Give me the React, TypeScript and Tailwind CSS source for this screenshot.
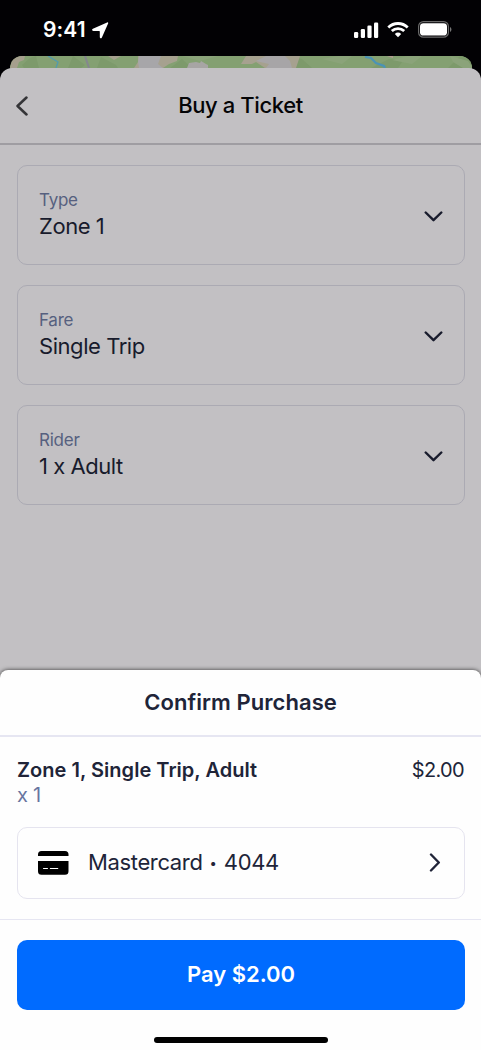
import React from "react";

type Field = { label: string; value: string };

const fields: Field[] = [
  { label: "Type", value: "Zone 1" },
  { label: "Fare", value: "Single Trip" },
  { label: "Rider", value: "1 x Adult" },
];

function LocationArrow() {
  return (
    <svg width="17" height="17" viewBox="0 0 17 17" fill="#fff" className="ml-[8px]">
      <path d="M15.1.4.9 6.7c-1.300.6-1 2.200.5 2.200H7.200c.4 0 .6.200.6.600v5.400c0 1.600 1.500 1.800 2.100.5L16.100 1.500c.4-.8-.2-1.400-1-1.100Z" />
    </svg>
  );
}

function StatusBar() {
  return (
    <div className="flex h-[56px] items-start justify-between pl-[43px] pr-[29px] pt-[18px] text-white">
      <div className="flex h-6 items-center">
        <span className="w-[41px] whitespace-nowrap text-[21px] font-semibold leading-6 tracking-[0.1px]">9:41</span>
        <LocationArrow />
      </div>
      <div className="flex h-6 items-center">
        <svg width="25" height="16" viewBox="0 0 25 16" fill="#fff" className="-mt-px">
          <rect x="0" y="10" width="4.200" height="6" rx="1.200" />
          <rect x="6.800" y="7" width="4.200" height="9" rx="1.200" />
          <rect x="13.400" y="3.500" width="4.200" height="12.500" rx="1.200" />
          <rect x="20" y="0.500" width="4.200" height="15.500" rx="1.200" />
        </svg>
        <svg width="22" height="16" viewBox="0 0 22 16" className="-mt-px ml-[8px]" fill="none" stroke="#fff" strokeWidth="2.800">
          <path d="M1.300 5.400a14 14 0 0 1 19.400 0" />
          <path d="M4.800 9.100a9 9 0 0 1 12.400 0" />
          <path d="M11 15.200 7.800 12.100a4.700 4.700 0 0 1 6.400 0Z" fill="#fff" stroke="none" />
        </svg>
        <svg width="34" height="17" viewBox="0 0 34 17" className="-mt-px ml-[9px]">
          <rect x="0.600" y="0.600" width="29.800" height="15.600" rx="4.800" fill="none" stroke="#6b6b6b" strokeWidth="1.200" />
          <rect x="2" y="2.200" width="27" height="12.400" rx="3.400" fill="#fff" />
          <path d="M32 6v5c1.900-.8 1.900-4.200 0-5Z" fill="#777" />
        </svg>
      </div>
    </div>
  );
}

function MapStrip() {
  return (
    <div className="ml-[10px] mr-[9px] h-[18px] overflow-hidden rounded-t-[12px] bg-[#84a072]">
      <svg width="462" height="18" viewBox="0 0 462 18">
        <path d="M0 12 2 4 7 0h8l-1 4-5 2-2 6Z" fill="#a59f8d" />
        <path d="m20 2 6-2 3 12H14l-2-3Zm38 10L63 0l12 9-4 3Zm29 0L91 1l15 8 2 3Zm73 0 12-9 10 9Zm112 0 8-12 12 3 10 9Zm89 0 18-9h15l-6 9Zm77 0 12-12h25l-6 6 10 6Z" fill="#7d9a6b" />
        <path d="m172 0 18 5 18-5Zm140 3 16-3h14l-10 8Zm70 1 15-4h15l-10 8Zm58-4 18 5 5 7h-10l-10-6Z" fill="#8ba37a" />
        <path d="m98 0 6 4 7-4Zm26 12 4-6 0-6h40l-1 5-8 3-6 4Z" fill="#a6a18f" />
        <path d="M129 0h22l-3 8 5 4h-24l-1-6Z" fill="#a7a6a9" />
        <path d="m177 12 2-5 7-1 4 1 1-2 5 3 2 1v3Z" fill="#a7a5a4" />
        <path d="m231 8 5-8h54l-4 12h-31l-9-6-4 2Z" fill="#a6a18f" />
        <path d="m246 5 10-5h19l5 5 2 7h-26l3-4Z" fill="#a7a5a7" />
        <path d="m75 0 4 12" stroke="#85868f" strokeWidth="2" />
        <path d="m38 0 10 6-2 6" fill="none" stroke="#529bad" strokeWidth="1.300" />
        <path d="m355 1 6 1 5 5 8 3 1 2" fill="none" stroke="#4b93b6" strokeWidth="2.200" />
        <path d="M377 0h6v2l-3-1Z" fill="#b39c91" />
      </svg>
    </div>
  );
}

function FieldCard({ label, value }: Field) {
  return (
    <div className="flex h-[100px] items-center justify-between rounded-[10px] border border-[#abaab3] px-[21px]">
      <div className="flex flex-col pb-[2px]">
        <span className="text-[17px] leading-[24px] tracking-[-0.25px] text-[#56607f]">{label}</span>
        <span className="-mt-px text-[22px] leading-[30px] tracking-[-0.45px] text-[#181b2c]">{value}</span>
      </div>
      <svg width="19" height="11" viewBox="0 0 19 11" fill="none" stroke="#181b2c" strokeWidth="2.400" strokeLinecap="round" strokeLinejoin="round" className="mt-[2px]">
        <path d="m1.700 1.500 7.800 7.700 7.800-7.700" />
      </svg>
    </div>
  );
}

function CardIcon() {
  return (
    <svg width="31" height="24" viewBox="0 0 31 24">
      <path d="M3.500 0h23.500a3.500 3.500 0 0 1 3.500 3.500V5H0V3.500A3.500 3.500 0 0 1 3.500 0ZM0 10h30.500v10.300a3.500 3.500 0 0 1-3.500 3.500H3.500A3.500 3.500 0 0 1 0 20.300Z" fill="#000" />
      <path d="M5.500 17.500h4M12.300 17.500h7.500" stroke="#fff" strokeWidth="1" strokeLinecap="round" />
    </svg>
  );
}

function ConfirmSheet() {
  return (
    <section className="relative flex h-[380px] flex-col rounded-t-[8px] bg-[#fefefe] text-[#202438] shadow-[0_0_4px_rgba(0,0,0,0.75)]">
      <h2 className="flex h-[67px] items-center justify-center border-b-2 border-[#e6e6f2] text-[22px] font-semibold tracking-[0.06px]">
        Confirm Purchase
      </h2>
      <div className="flex h-[90px] justify-between px-[17px] pt-[20px]">
        <div className="flex flex-col">
          <span className="text-[20px] font-semibold leading-[26px] tracking-[0.03px]">Zone 1, Single Trip, Adult</span>
          <span className="text-[20px] leading-[25px] tracking-[-0.3px] text-[#6875a0]">x 1</span>
        </div>
        <span className="text-[20px] leading-[26px] tracking-[-0.65px]">$2.00</span>
      </div>
      <div className="ml-[17px] mr-[16px] flex h-[72px] items-center rounded-[10px] border border-[#e5e4ef] pl-[20px] pr-[23px]">
        <CardIcon />
        <span className="-mt-[2px] ml-[19px] flex grow items-center text-[22px] leading-[30px] tracking-[-0.36px]">
          Mastercard
          <span className="mx-[7px] mt-px text-[13px] tracking-normal">•</span>
          4044
        </span>
        <svg width="12" height="19" viewBox="0 0 12 19" fill="none" stroke="#202438" strokeWidth="2.400" strokeLinecap="round" strokeLinejoin="round" className="-mt-px">
          <path d="m2 1.500 7.800 8L2 17.500" />
        </svg>
      </div>
      <div className="mt-[20px] border-t border-[#e6e6f2] pl-[17px] pr-[16px] pt-[20px]">
        <button className="flex h-[70px] w-full items-center justify-center rounded-[10px] bg-[#006bff] pb-[2px] text-[22px] font-semibold text-white">
          Pay $2.00
        </button>
      </div>
      <div className="ml-[154px] mt-[27px] h-[6px] w-[174px] rounded-full bg-black" />
    </section>
  );
}

export default function App() {
  return (
    <main className="flex h-[1050px] w-[481px] flex-col overflow-hidden bg-[#020104] font-['Inter',sans-serif]">
      <StatusBar />
      <MapStrip />
      <section className="-mt-[6px] flex h-[602px] shrink-0 flex-col rounded-t-[12px] bg-[#c2c0c3]">
        <header className="flex h-[77px] shrink-0 items-center border-b-2 border-[#9f9da2] pl-[16px] pr-[28px]">
          <svg width="12" height="20" viewBox="0 0 12 20" fill="none" stroke="#343437" strokeWidth="2.500" strokeLinecap="round" strokeLinejoin="round" className="mt-px">
            <path d="m10.500 1.500-9 8.500 9 8.500" />
          </svg>
          <h1 className="grow text-center text-[22px] font-medium tracking-[-0.4px] text-[#050507]">Buy a Ticket</h1>
        </header>
        <div className="ml-[17px] mr-[16px] mt-[20px] flex flex-col gap-[20px]">
          {fields.map((field) => (
            <FieldCard key={field.label} {...field} />
          ))}
        </div>
      </section>
      <div className="shrink-0 bg-[#c2c0c3]">
        <ConfirmSheet />
      </div>
    </main>
  );
}
